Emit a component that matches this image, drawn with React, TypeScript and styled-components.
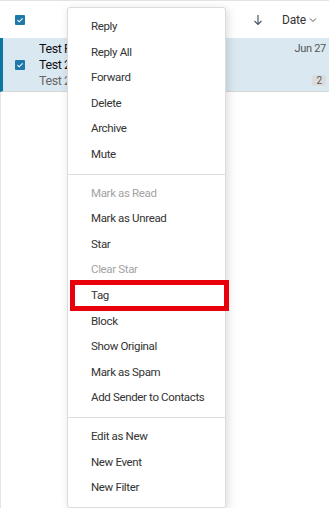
import styled, {createGlobalStyle} from "styled-components";

const GlobalStyle = createGlobalStyle`
    html, body {
        margin: 0;
        padding: 0;
        background: #ffffff;
        font-family: Roboto, "Liberation Sans", Arial, sans-serif;
    }
`

type MenuItemType = {
    label: string
    disabled?: boolean
    marked?: boolean
}

const menuGroups: Array<Array<MenuItemType>> = [
    [
        {label: "Reply"},
        {label: "Reply All"},
        {label: "Forward"},
        {label: "Delete"},
        {label: "Archive"},
        {label: "Mute"},
    ],
    [
        {label: "Mark as Read", disabled: true},
        {label: "Mark as Unread"},
        {label: "Star"},
        {label: "Clear Star", disabled: true},
        {label: "Tag", marked: true},
        {label: "Block"},
        {label: "Show Original"},
        {label: "Mark as Spam"},
        {label: "Add Sender to Contacts"},
    ],
    [
        {label: "Edit as New"},
        {label: "New Event"},
        {label: "New Filter"},
    ],
];

const CheckIcon = () => (
    <CheckBox>
        <svg width="10" height="10" viewBox="0 0 10 10">
            <path d="M2.4 5.2 L4.2 6.8 L7.6 3.4" fill="none" stroke="#ffffff" strokeWidth="1.1"/>
        </svg>
    </CheckBox>
);

export default function App() {
    return (
        <Page>
            <GlobalStyle/>
            <Header>
                <CheckCell><CheckIcon/></CheckCell>
                <HeaderSpacer/>
                <SortArrow>
                    <svg width="10" height="12" viewBox="0 0 10 12">
                        <path d="M5 1 V10.5 M1.5 7 L5 10.5 L8.5 7" fill="none" stroke="#4a5a6a" strokeWidth="1.2"/>
                    </svg>
                </SortArrow>
                <SortLabel>
                    Date
                    <svg width="8" height="6" viewBox="0 0 8 6">
                        <path d="M1 1.5 L4 4.5 L7 1.5" fill="none" stroke="#555" strokeWidth="1"/>
                    </svg>
                </SortLabel>
            </Header>
            <MessageRow>
                <CheckCell><CheckIcon/></CheckCell>
                <MessageText>
                    <Line>Test Forward</Line>
                    <Line>Test 2</Line>
                    <Line $muted>Test 2 preview</Line>
                </MessageText>
                <MessageMeta>
                    <DateText>Jun 27</DateText>
                    <Badge>2</Badge>
                </MessageMeta>
            </MessageRow>
            <ListRest/>
            <Menu>
                {menuGroups.map((group, gi) => (
                    <MenuGroup key={gi} $first={gi === 0}>
                        {group.map(item => (
                            <MenuItem key={item.label} $disabled={item.disabled}>
                                {item.label}
                                {item.marked && <Highlight/>}
                            </MenuItem>
                        ))}
                    </MenuGroup>
                ))}
            </Menu>
        </Page>
    );
}

const Page = styled.div`
    position: relative;
    width: 329px;
    height: 508px;
    overflow: hidden;
    background: #ffffff;
    border-top: 1px solid #e3e3e3;
    box-sizing: border-box;
`

const Header = styled.div`
    display: flex;
    align-items: center;
    height: 37px;
    padding-right: 1px;
    box-sizing: border-box;
`

const HeaderSpacer = styled.div`
    flex: 1;
`

const SortArrow = styled.span`
    display: flex;
    margin-right: 19px;
    margin-top: 1px;
`

const SortLabel = styled.span`
    display: flex;
    align-items: center;
    gap: 3px;
    font-size: 12px;
    letter-spacing: -0.2px;
    color: #333333;
    padding-right: 11px;
`

const CheckCell = styled.div`
    width: 39px;
    display: flex;
    justify-content: flex-start;
    padding-left: 15px;
    box-sizing: border-box;
    flex-shrink: 0;
`

const CheckBox = styled.span`
    display: flex;
    width: 10px;
    height: 10px;
    border-radius: 1px;
    background: #1f78ab;
`

const MessageRow = styled.div`
    display: flex;
    align-items: center;
    height: 54px;
    background: #dae8f1;
    border-left: 3px solid #0b76a4;
    border-bottom: 1px solid #d6d6d6;
    box-sizing: border-box;
    & > ${CheckCell} {
        padding-left: 12px;
        width: 36px;
    }
`

const MessageText = styled.div`
    display: flex;
    flex-direction: column;
    flex: 1;
    min-width: 0;
    padding-top: 1px;
`

const Line = styled.span<{$muted?: boolean}>`
    font-size: 12.5px;
    line-height: 16px;
    letter-spacing: -0.4px;
    color: ${props => props.$muted ? "#666666" : "#111111"};
    white-space: nowrap;
    overflow: hidden;
`

const MessageMeta = styled.div`
    display: flex;
    flex-direction: column;
    align-items: flex-end;
    justify-content: space-between;
    height: 100%;
    padding: 4px 3px 5px 0;
    box-sizing: border-box;
`

const DateText = styled.span`
    font-size: 11px;
    letter-spacing: -0.3px;
    color: #555555;
`

const Badge = styled.span`
    font-size: 10px;
    line-height: 11px;
    color: #555555;
    background: #dcdcdc;
    border-radius: 2px;
    padding: 0 4px;
`

const ListRest = styled.div`
    height: 420px;
    border-left: 1px solid #e4e4e4;
`

const Menu = styled.div`
    position: absolute;
    top: 6px;
    left: 67px;
    width: 159px;
    background: #ffffff;
    border: 1px solid #dcdcdc;
    border-radius: 3px;
    box-shadow: 2px 2px 10px rgba(0, 0, 0, 0.14);
    box-sizing: border-box;
`

const MenuGroup = styled.div<{$first?: boolean}>`
    padding: 6px 0;
    border-top: ${props => props.$first ? "none" : "1px solid #dddddd"};
`

const MenuItem = styled.div<{$disabled?: boolean}>`
    position: relative;
    height: 25.6px;
    line-height: 25.6px;
    padding-left: 23px;
    font-size: 11.5px;
    letter-spacing: -0.35px;
    color: ${props => props.$disabled ? "#a3a3a3" : "#333333"};
    white-space: nowrap;
`

const Highlight = styled.span`
    position: absolute;
    top: -3px;
    bottom: -2px;
    left: 2px;
    right: -4px;
    border: 5px solid #e8000b;
`
